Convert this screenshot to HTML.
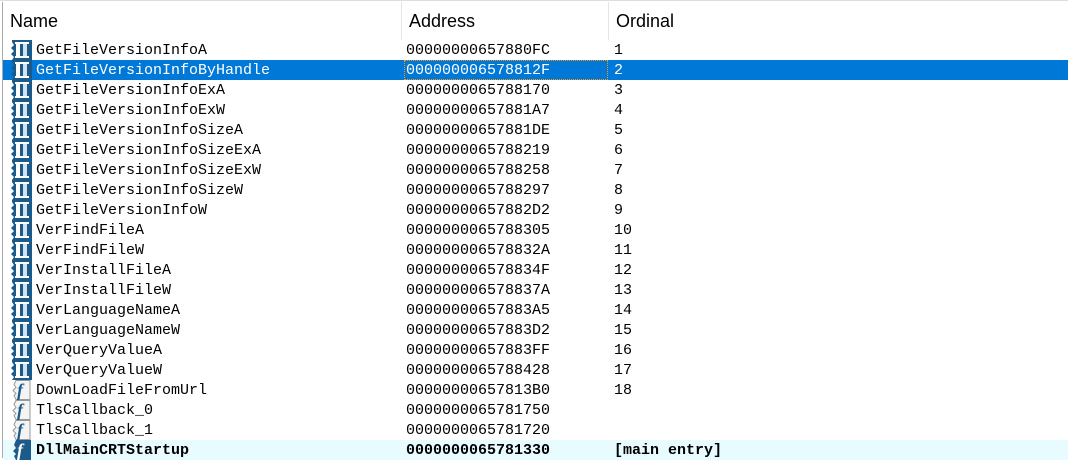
<!DOCTYPE html>
<html><head><style>
body{margin:0;width:1068px;height:458px;overflow:hidden;background:#fff;position:relative;font-family:"Liberation Mono",monospace;}
.hdr{position:absolute;top:0;left:0;width:1068px;height:40px;border-top:1px solid #ddd;box-sizing:border-box}
.hdr div{position:absolute;top:10px;font:18px "Liberation Sans",sans-serif;color:#000}
.sep{position:absolute;top:2px;width:1px;height:38px;background:#e5e5e5}
.lb{position:absolute;left:2px;top:2px;width:1px;height:456px;background:#aaa}
.row{position:absolute;left:3px;width:1065px;height:20px;font-size:15px;line-height:21px;color:#000;white-space:pre}
.row span{position:absolute;top:0}
.n{left:33px}.a{left:403px}.o{left:611px}
.sel{background:#0078d7;color:#fff}
.main{background:#e8fcff;font-weight:bold}
.ic{position:absolute;left:3px;top:0}
</style></head><body>
<div class="hdr"><div style="left:10px">Name</div><div style="left:409px">Address</div><div style="left:616px">Ordinal</div></div>
<div class="sep" style="left:401px"></div><div class="sep" style="left:608px"></div>
<div class="lb"></div>
<div id="rows"></div>
<script>
var D='<svg class="ic" width="26" height="20" viewBox="0 0 26 20"><path d="M6 0h20v20H6l2-3-3-3 3-3-3-3 3-3-2-3z" fill="#1c5a8a"/><rect x="10" y="3" width="4" height="14" fill="#fff"/><rect x="17" y="3" width="4" height="14" fill="#cfe3f2"/><rect x="9" y="2" width="14" height="2" fill="#fff"/><rect x="9" y="16" width="14" height="2" fill="#fff"/></svg>';
var F='<svg class="ic" width="26" height="20" viewBox="0 0 26 20"><path d="M10 0.5h14v19H10l-2-4 2-2-3-3 3-3-2-3z" fill="#f4f4f4" stroke="#999"/><text x="11" y="16" font-family="Liberation Serif" font-style="italic" font-weight="bold" font-size="18" fill="#1c5a8a">f</text></svg>';
var FM='<svg class="ic" width="26" height="20" viewBox="0 0 26 20"><path d="M10 0h15v20H10l-2-4 2-2-3-3 3-3-2-3z" fill="#1c5a8a"/><text x="11" y="16" font-family="Liberation Serif" font-style="italic" font-weight="bold" font-size="18" fill="#fff">f</text></svg>';
var r=[["GetFileVersionInfoA","00000000657880FC","1"],["GetFileVersionInfoByHandle","000000006578812F","2"],["GetFileVersionInfoExA","0000000065788170","3"],["GetFileVersionInfoExW","00000000657881A7","4"],["GetFileVersionInfoSizeA","00000000657881DE","5"],["GetFileVersionInfoSizeExA","0000000065788219","6"],["GetFileVersionInfoSizeExW","0000000065788258","7"],["GetFileVersionInfoSizeW","0000000065788297","8"],["GetFileVersionInfoW","00000000657882D2","9"],["VerFindFileA","0000000065788305","10"],["VerFindFileW","000000006578832A","11"],["VerInstallFileA","000000006578834F","12"],["VerInstallFileW","000000006578837A","13"],["VerLanguageNameA","00000000657883A5","14"],["VerLanguageNameW","00000000657883D2","15"],["VerQueryValueA","00000000657883FF","16"],["VerQueryValueW","0000000065788428","17"],["DownLoadFileFromUrl","00000000657813B0","18"],["TlsCallback_0","0000000065781750",""],["TlsCallback_1","0000000065781720",""],["DllMainCRTStartup","0000000065781330","[main entry]"]];
var h='';
r.forEach(function(x,i){var c=i==1?' sel':(i==20?' main':'');var ic=i<17?D:(i==20?FM:F);
h+='<div class="row'+c+'" style="top:'+(40+i*20)+'px">'+ic+'<span class="n">'+x[0]+'</span><span class="a"'+(i==1?' style="outline:1px dotted #f90;outline-offset:-1px;left:401px;padding-left:2px;width:202px;height:20px"':'')+'>'+x[1]+'</span><span class="o">'+x[2]+'</span></div>';});
document.getElementById('rows').innerHTML=h;
</script>
</body></html>
